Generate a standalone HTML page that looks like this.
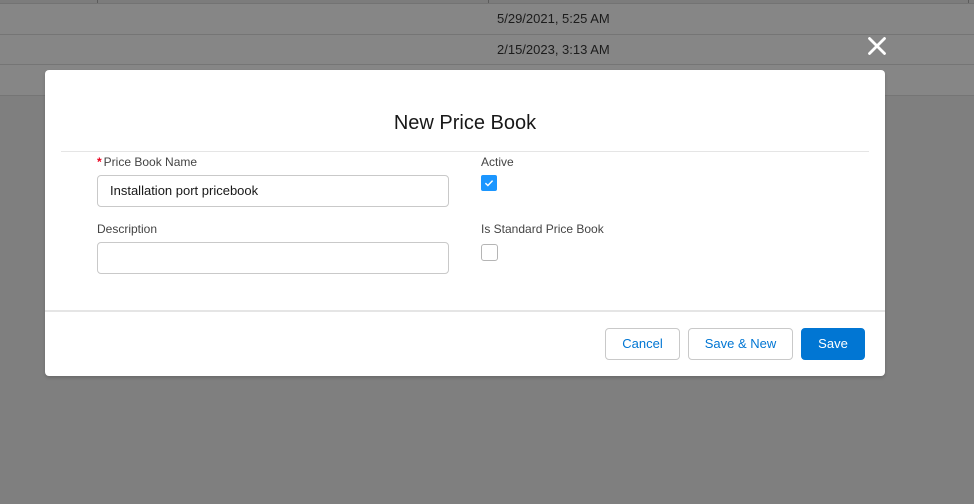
<!DOCTYPE html>
<html>
<head>
<meta charset="utf-8">
<style>
html,body{margin:0;padding:0}
body{width:974px;height:504px;position:relative;overflow:hidden;background:#7f7f7f;font-family:"Liberation Sans",sans-serif;color:#181818}
div,span{position:absolute;box-sizing:border-box}
.t{white-space:nowrap}
.lbl{font-size:12px;line-height:14px;color:#444;white-space:nowrap}
.inp{left:97px;width:352px;height:32px;border:1px solid #c9c9c9;border-radius:4px;background:#fff}
.btn{top:328px;height:32px;border:1px solid #c9c9c9;border-radius:4px;background:#fff;color:#0176d3;font-size:13px;line-height:30px;text-align:center;white-space:nowrap}
</style>
</head>
<body>
<div style="left:0;top:0;width:974px;height:96px;background:#868686"></div>
<div style="left:0;top:0;width:974px;height:3px;background:#7c7c7c"></div>
<div style="left:0;top:3px;width:974px;height:1px;background:#737373"></div>
<div style="left:0;top:34px;width:974px;height:1px;background:#757575"></div>
<div style="left:0;top:64px;width:974px;height:1px;background:#757575"></div>
<div style="left:0;top:95px;width:974px;height:1px;background:#757575"></div>
<div style="left:97px;top:0;width:1px;height:3px;background:#5c5c5c"></div>
<div style="left:488px;top:0;width:1px;height:3px;background:#5c5c5c"></div>
<div style="left:968px;top:0;width:1px;height:3px;background:#5c5c5c"></div>
<div class="t" style="left:497px;top:11px;font-size:13px;line-height:15px;color:#1c1c1c">5/29/2021, 5:25 AM</div>
<div class="t" style="left:497px;top:42px;font-size:13px;line-height:15px;color:#1c1c1c">2/15/2023, 3:13 AM</div>

<svg style="position:absolute;left:868px;top:37px" width="18" height="18" viewBox="0 0 18 18">
<path d="M1.5 1.5L16.5 16.5M16.5 1.5L1.5 16.5" stroke="#fff" stroke-width="2.8" fill="none" stroke-linecap="round"/>
</svg>

<div style="left:45px;top:70px;width:840px;height:306px;background:#fff;border-radius:4px;box-shadow:0 2px 3px 0 rgba(0,0,0,.16)">
</div>

<div class="t" style="left:45px;top:110px;width:840px;text-align:center;font-size:20px;line-height:26px;color:#181818">New Price Book</div>
<div style="left:61px;top:151px;width:808px;height:1px;background:#e5e5e5"></div>

<div class="lbl" style="left:97px;top:155px"><span style="position:static;color:#ea001e;font-weight:bold">*</span><span style="position:static;margin-left:2px">Price Book Name</span></div>
<div class="inp" style="top:175px"></div>
<div class="t" style="left:110px;top:183px;font-size:13px;line-height:15px;color:#181818">Installation port pricebook</div>

<div class="lbl" style="left:97px;top:222px">Description</div>
<div class="inp" style="top:242px"></div>

<div class="lbl" style="left:481px;top:155px">Active</div>
<div style="left:481px;top:175px;width:16px;height:16px;border-radius:2px;background:#1b96ff"></div>
<svg style="position:absolute;left:481px;top:175px" width="16" height="16" viewBox="0 0 16 16">
<path d="M4.4 8.2L6.9 10.5L11.6 5.6" stroke="#fff" stroke-width="1.4" fill="none"/>
</svg>

<div class="lbl" style="left:481px;top:222px">Is Standard Price Book</div>
<div style="left:481px;top:243.5px;width:17px;height:17px;border:1.3px solid #b5b5b5;border-radius:3px;background:#fff"></div>

<div style="left:45px;top:310px;width:840px;height:2px;background:#e5e5e5"></div>

<div class="btn" style="left:605px;width:75px">Cancel</div>
<div class="btn" style="left:688px;width:105px">Save &amp; New</div>
<div class="btn" style="left:801px;width:64px;background:#0176d3;border-color:#0176d3;color:#fff">Save</div>
</body>
</html>
